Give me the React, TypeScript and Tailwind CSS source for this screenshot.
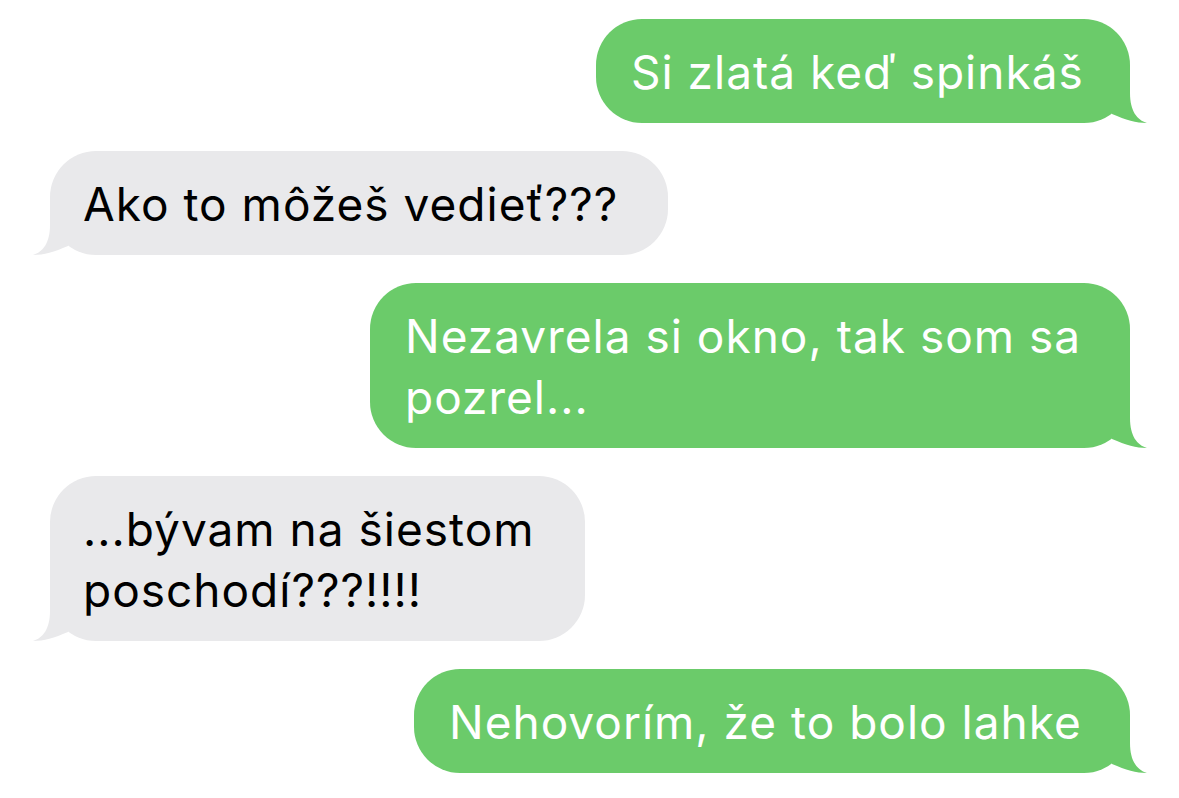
const GREEN = "#6BCB6A";
const GRAY = "#E9E9EB";

function Tail({ side, color }: { side: "left" | "right"; color: string }) {
  return (
    <svg
      width="40"
      height="50"
      viewBox="0 0 40 50"
      className={
        side === "right"
          ? "absolute bottom-0 right-[-18px]"
          : "absolute bottom-0 left-[-18px] -scale-x-100"
      }
    >
      <path d="M22 4 L22 20 C22 38 29 47 39 50 C28 50 18 47 4 41 L4 4 Z" fill={color} />
    </svg>
  );
}

function Sent({ text, width }: { text: React.ReactNode; width: string }) {
  return (
    <div className="flex justify-end pr-[49px]">
      <div
        className={`relative rounded-[46px] bg-[#6BCB6A] pl-[35px] pr-[30px] pt-[23px] pb-[20px] text-[46px] leading-[61px] tracking-[1px] text-white whitespace-nowrap ${width}`}
      >
        {text}
        <Tail side="right" color={GREEN} />
      </div>
    </div>
  );
}

function Received({ text, width }: { text: React.ReactNode; width: string }) {
  return (
    <div className="flex justify-start pl-[50px]">
      <div
        className={`relative rounded-[46px] bg-[#E9E9EB] pl-[33px] pr-[30px] pt-[23px] pb-[20px] text-[46px] leading-[61px] tracking-[1px] text-black whitespace-nowrap ${width}`}
      >
        {text}
        <Tail side="left" color={GRAY} />
      </div>
    </div>
  );
}

export default function App() {
  return (
    <div
      className="min-h-screen w-full bg-white pt-[19px] flex flex-col gap-[28px]"
      style={{ fontFamily: "Inter, 'Liberation Sans', sans-serif" }}
    >
      <Sent text="Si zlatá keď spinkáš" width="w-[534px]" />
      <Received text="Ako to môžeš vedieť???" width="w-[618px]" />
      <Sent
        text={
          <>
            Nezavrela si okno, tak som sa
            <br />
            pozrel...
          </>
        }
        width="w-[760px]"
      />
      <Received
        text={
          <>
            ...bývam na šiestom
            <br />
            poschodí???!!!!
          </>
        }
        width="w-[535px]"
      />
      <Sent text="Nehovorím, že to bolo lahke" width="w-[716px]" />
    </div>
  );
}
